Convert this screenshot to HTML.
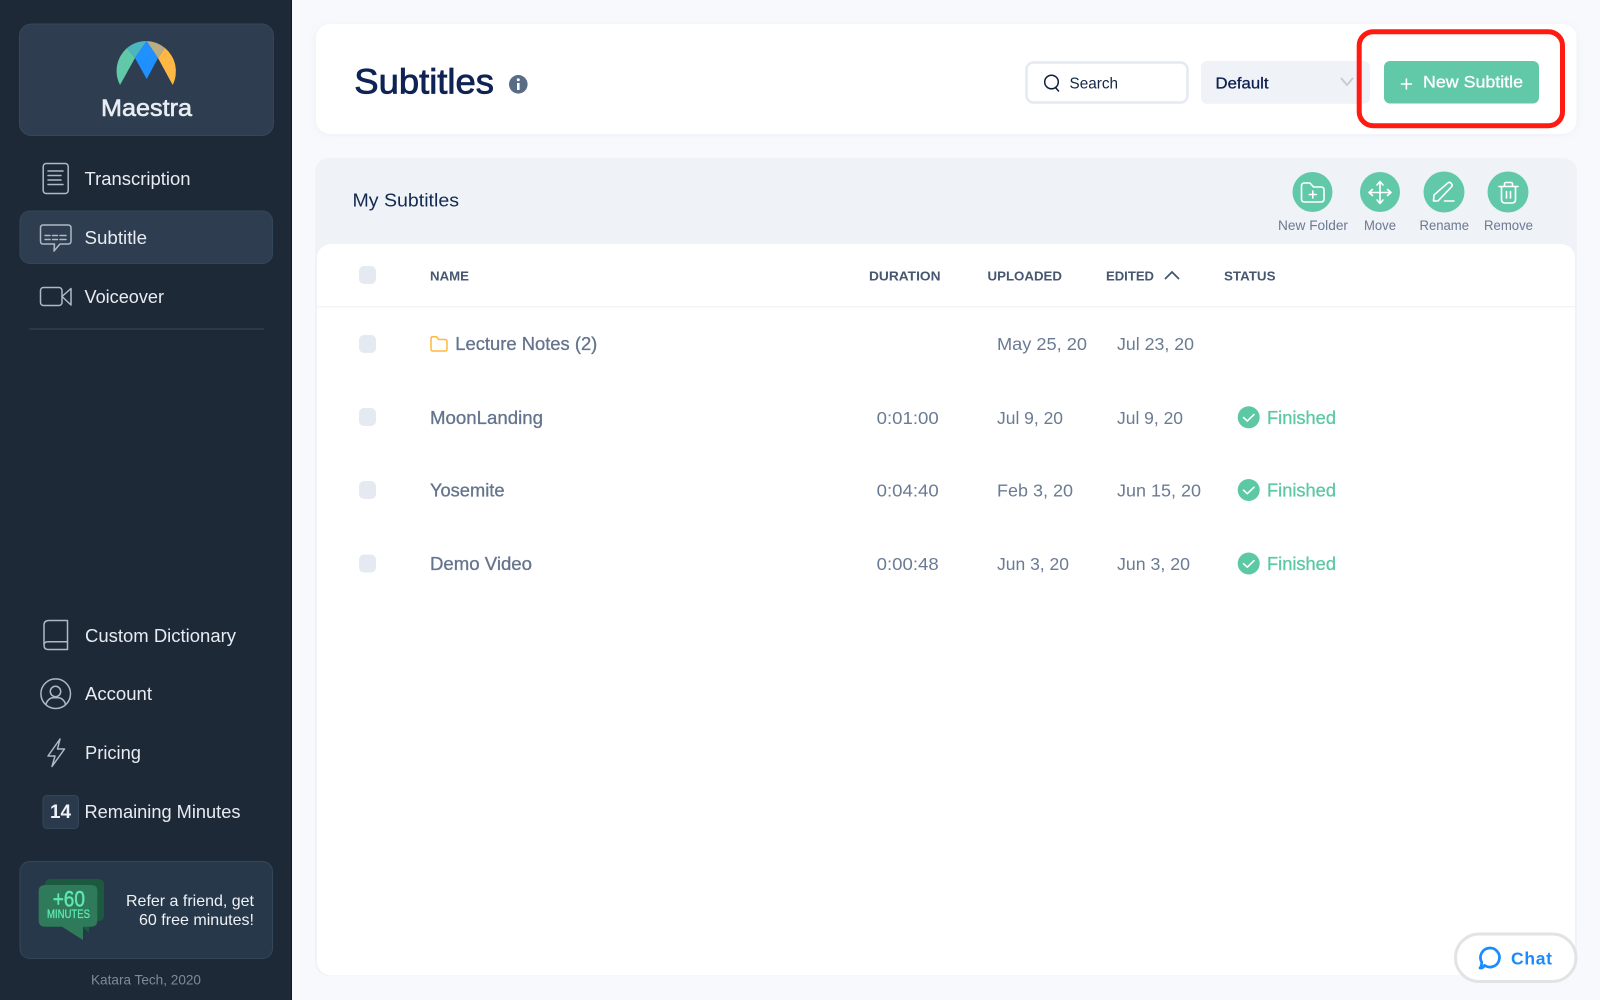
<!DOCTYPE html>
<html lang="en">
<head>
<meta charset="utf-8">
<title>Maestra - Subtitles</title>
<style>
html,body{margin:0;padding:0;width:1600px;height:1000px;overflow:hidden;background:#f8f9fd}
svg{display:block}
text{font-family:"Liberation Sans",Arial,sans-serif;white-space:pre}
.nav{font-size:18px;fill:#e8ecf2}
.hd{font-size:13px;font-weight:bold;fill:#46576f}
.nm{font-size:18px;fill:#64748c;stroke:#64748c;stroke-width:.3}
.cell{font-size:17.5px;fill:#6a7b93}
.fin{font-size:18px;fill:#5cc8a4;stroke:#5cc8a4;stroke-width:.3}
.lbl{font-size:13.5px;fill:#6b7a92}
.ico{fill:none;stroke:#aeb8c6;stroke-width:1.5;stroke-linecap:round;stroke-linejoin:round}
.wi{fill:none;stroke:#fff;stroke-width:1.6;stroke-linecap:round;stroke-linejoin:round}
.cb{fill:#e4e9f2}
</style>
</head>
<body>
<svg width="1600" height="1000" viewBox="0 0 1600 1000" xmlns="http://www.w3.org/2000/svg">
<defs>
<filter id="sh" x="-5%" y="-20%" width="110%" height="140%"><feDropShadow dx="0" dy="1" stdDeviation="4" flood-color="#8a97b5" flood-opacity=".10"/></filter>
</defs>
<rect width="1600" height="1000" fill="#f8f9fd"/>

<!-- Sidebar -->
<rect x="0" y="0" width="291" height="1000" fill="#1e2938"/>
<rect x="291" y="0" width="1" height="1000" fill="#14181f"/>

<rect x="19.5" y="24" width="254" height="111.500" rx="12" fill="#2e3e50" stroke="#35485b"/>
<!-- Logo -->
<path d="M127 48 A30.5 30.5 0 0 0 120 85 L135 58 Z" fill="#62c9a8"/>
<path d="M127 48 A30.5 30.5 0 0 1 146.7 41 L135 58 Z" fill="#4bb5c0"/>
<path d="M146.7 41 L158 58 L146.7 79 L135 58 Z" fill="#1e90ff"/>
<path d="M146.7 41 A30.5 30.5 0 0 1 165 48 L158 58 Z" fill="#b8ad85"/>
<path d="M165 48 A30.5 30.5 0 0 1 172.7 85 L158 58 Z" fill="#ffb846"/>
<text x="101" y="116" font-size="24.5" fill="#e9edf3" stroke="#e9edf3" stroke-width=".6" textLength="91" lengthAdjust="spacingAndGlyphs">Maestra</text>

<!-- Transcription -->
<rect x="43.2" y="163.5" width="25" height="30" rx="3" class="ico"/>
<path d="M48 171H63M48 175.5H61M48 180H61M48 184.5H63" class="ico" stroke-width="1.2"/>
<text x="84.5" y="185" class="nav" textLength="106" lengthAdjust="spacingAndGlyphs">Transcription</text>

<!-- Subtitle -->
<rect x="20" y="211" width="252.5" height="52.5" rx="10" fill="#2e3e50" stroke="#33475a"/>
<path d="M43 225H68Q71 225 71 228V241Q71 244 68 244H60L54 251L54.5 244H43Q40.500 244 40.500 241V228Q40.500 225 43 225Z" class="ico"/>
<path d="M45 235.500H50M52.500 235.500H57.500M60 235.500H66M45 239.500H50M52.500 239.500H57.500M60 239.500H66" class="ico" stroke-width="1.200"/>
<text x="84.500" y="244" class="nav" textLength="62.500" lengthAdjust="spacingAndGlyphs">Subtitle</text>

<!-- Voiceover -->
<rect x="40.500" y="287.500" width="21.500" height="18" rx="3" class="ico"/>
<path d="M62 296.500L71 288.500V305Z" class="ico"/>
<text x="84.500" y="303" class="nav" textLength="79.500" lengthAdjust="spacingAndGlyphs">Voiceover</text>

<rect x="29" y="328.500" width="235" height="1" fill="#36495c"/>

<!-- Custom Dictionary -->
<path d="M67.500 620.500H49Q44 620.500 44 625V645Q44 649.500 48 649.500H67.500ZM44 645Q44 641.700 48 641.700H67.500" class="ico"/>
<text x="85" y="642" class="nav" textLength="151" lengthAdjust="spacingAndGlyphs">Custom Dictionary</text>

<!-- Account -->
<circle cx="55.700" cy="693.700" r="14.800" class="ico"/>
<circle cx="55.500" cy="691.500" r="5.200" class="ico"/>
<path d="M46 704.500C47 700 50.500 697.800 53 697.800H58.500C61 697.800 64.500 700 65.500 704.500" class="ico"/>
<text x="85" y="700" class="nav" textLength="67" lengthAdjust="spacingAndGlyphs">Account</text>

<!-- Pricing -->
<path d="M60 739L48 756H55L52 766.500L64.500 749H57.500Z" class="ico"/>
<text x="85" y="759" class="nav" textLength="56" lengthAdjust="spacingAndGlyphs">Pricing</text>

<!-- Remaining -->
<rect x="43" y="795.500" width="35.500" height="33" rx="4" fill="#2a3a4c" stroke="#34475a"/>
<text x="50" y="818" font-size="19" font-weight="bold" fill="#eef1f5" textLength="21" lengthAdjust="spacingAndGlyphs">14</text>
<text x="84.500" y="818" class="nav" textLength="156" lengthAdjust="spacingAndGlyphs">Remaining Minutes</text>

<!-- Refer card -->
<rect x="20" y="861.500" width="252.500" height="97" rx="10" fill="#27384a" stroke="#34475a"/>
<path d="M51 879H98Q104 879 104 885V915Q104 921 98 921H89V933L76 921H51Q45 921 45 915V885Q45 879 51 879Z" fill="#1c5a40"/>
<path d="M45 885H91Q97.300 885 97.300 891V920.500Q97.300 926.700 91 926.700H83V940L62 926.700H45Q38.700 926.700 38.700 920.500V891Q38.700 885 45 885Z" fill="#2f7a5a"/>
<text x="52.700" y="906.500" font-size="22.500" fill="#5fe8b0" stroke="#5fe8b0" stroke-width=".5" textLength="32.300" lengthAdjust="spacingAndGlyphs">+60</text>
<text x="47" y="918" font-size="12" fill="#5fe8b0" stroke="#5fe8b0" stroke-width=".3" textLength="43" lengthAdjust="spacingAndGlyphs">MINUTES</text>
<text x="126" y="906" font-size="16" fill="#eef1f5" textLength="128" lengthAdjust="spacingAndGlyphs">Refer a friend, get</text>
<text x="139" y="925" font-size="16" fill="#eef1f5" textLength="115" lengthAdjust="spacingAndGlyphs">60 free minutes!</text>
<text x="91" y="984.500" font-size="14" fill="#7f8a98" textLength="110" lengthAdjust="spacingAndGlyphs">Katara Tech, 2020</text>

<!-- Header card -->
<rect x="316" y="24" width="1260.500" height="110" rx="14" fill="#fff" filter="url(#sh)"/>
<text x="354.300" y="93.300" font-size="35" fill="#0f2354" stroke="#0f2354" stroke-width=".8" textLength="139.700" lengthAdjust="spacingAndGlyphs">Subtitles</text>
<circle cx="518.300" cy="84.300" r="9.300" fill="#5a6c85"/>
<rect x="517" y="83" width="2.600" height="7" fill="#fff"/>
<circle cx="518.300" cy="79.800" r="1.500" fill="#fff"/>

<!-- Search -->
<rect x="1026.500" y="62.500" width="161" height="40" rx="7" fill="#fff" stroke="#e4e9f2" stroke-width="2.500"/>
<circle cx="1051.500" cy="82" r="6.800" fill="none" stroke="#0f1f3d" stroke-width="1.500"/>
<path d="M1055.500 87.500L1058.500 91" fill="none" stroke="#0f1f3d" stroke-width="1.500" stroke-linecap="round"/>
<text x="1069.500" y="88.700" font-size="16" fill="#142448" textLength="48.500" lengthAdjust="spacingAndGlyphs">Search</text>

<!-- Select -->
<rect x="1201" y="61" width="169" height="42.700" rx="6" fill="#eff2f7"/>
<text x="1215.500" y="88.500" font-size="16" fill="#0f2050" stroke="#0f2050" stroke-width=".3" textLength="53" lengthAdjust="spacingAndGlyphs">Default</text>
<path d="M1341 78L1347 85L1353 78" fill="none" stroke="#c8ccd3" stroke-width="2"/>

<!-- New Subtitle -->
<rect x="1384" y="61" width="155" height="42.500" rx="6" fill="#62c9a8"/>
<path d="M1406.400 79V89M1401.400 84H1411.400" class="wi" stroke-width="1.800"/>
<text x="1423" y="87.700" font-size="17" fill="#fff" stroke="#fff" stroke-width=".3" textLength="100" lengthAdjust="spacingAndGlyphs">New Subtitle</text>

<!-- Red highlight -->
<rect x="1359.200" y="31.700" width="203.300" height="94" rx="14" fill="none" stroke="#ff1a12" stroke-width="5"/>

<!-- Panel -->
<rect x="315" y="158" width="1262" height="818" rx="14" fill="#eff2f7"/>
<text x="352.500" y="206.700" font-size="18" fill="#152a50" textLength="106.500" lengthAdjust="spacingAndGlyphs">My Subtitles</text>

<!-- Action buttons -->
<circle cx="1312.500" cy="192" r="20" fill="#62c9a8"/>
<path d="M1301.500 186Q1301.500 183 1304.500 183H1310L1313.500 187H1321Q1324 187 1324 190V199Q1324 202 1321 202H1304.500Q1301.500 202 1301.500 199Z" class="wi"/>
<path d="M1312.800 191V198M1309.300 194.500H1316.300" class="wi" stroke-width="1.300"/>
<circle cx="1380" cy="192" r="20" fill="#62c9a8"/>
<path d="M1380 182V203M1369.500 192.500H1391M1377 185L1380 181.500L1383 185M1377 200L1380 203.500L1383 200M1372.500 189.500L1369 192.500L1372.500 195.500M1387.500 189.500L1391 192.500L1387.500 195.500" class="wi"/>
<circle cx="1444" cy="192" r="20.500" fill="#62c9a8"/>
<path d="M1434 195L1448 182.800Q1449.800 181.800 1451 183.200L1451.800 184.200Q1452.700 185.500 1451.500 186.800L1438 201H1433.500Z" class="wi"/>
<path d="M1444.500 201H1454" class="wi"/>
<circle cx="1508" cy="192" r="20.500" fill="#62c9a8"/>
<path d="M1499 186.500H1518M1501.500 186.500V199.500Q1501.500 203 1505 203H1512Q1515.500 203 1515.500 199.500V186.500M1504.500 186.500V184Q1504.500 182.500 1506 182.500H1511Q1512.500 182.500 1512.500 184V186.500M1506.500 191.500V198M1510.500 191.500V198" class="wi"/>
<text x="1278" y="230" class="lbl" textLength="70" lengthAdjust="spacingAndGlyphs">New Folder</text>
<text x="1364" y="230" class="lbl" textLength="32" lengthAdjust="spacingAndGlyphs">Move</text>
<text x="1419.500" y="230" class="lbl" textLength="49.500" lengthAdjust="spacingAndGlyphs">Rename</text>
<text x="1484" y="230" class="lbl" textLength="49" lengthAdjust="spacingAndGlyphs">Remove</text>

<!-- Table card -->
<rect x="317" y="244" width="1258" height="731.500" rx="14" fill="#fff"/>
<rect x="317" y="306" width="1258" height="1.500" fill="#f3f4f8"/>
<rect x="359" y="266" width="17" height="18" rx="5" class="cb"/>
<text x="430" y="280.500" class="hd" textLength="39" lengthAdjust="spacingAndGlyphs">NAME</text>
<text x="869" y="280.500" class="hd" textLength="71.500" lengthAdjust="spacingAndGlyphs">DURATION</text>
<text x="987.500" y="280.500" class="hd" textLength="74.500" lengthAdjust="spacingAndGlyphs">UPLOADED</text>
<text x="1106" y="280.500" class="hd" textLength="48" lengthAdjust="spacingAndGlyphs">EDITED</text>
<path d="M1165 279L1172 272L1179 279" fill="none" stroke="#46576f" stroke-width="1.800"/>
<text x="1224" y="280.500" class="hd" textLength="51.500" lengthAdjust="spacingAndGlyphs">STATUS</text>

<!-- Row 1 -->
<rect x="359" y="335" width="17" height="18" rx="5" class="cb"/>
<path d="M431 338.500Q431 336.700 432.800 336.700H436.500L438.500 339.500H445Q447 339.500 447 341.500V349Q447 351 445 351H433Q431 351 431 349Z" fill="none" stroke="#ffb83f" stroke-width="1.500" stroke-linejoin="round"/>
<text x="455.300" y="350" class="nm" textLength="142" lengthAdjust="spacingAndGlyphs">Lecture Notes (2)</text>
<text x="997" y="350" class="cell" textLength="90" lengthAdjust="spacingAndGlyphs">May 25, 20</text>
<text x="1117" y="350" class="cell" textLength="77" lengthAdjust="spacingAndGlyphs">Jul 23, 20</text>

<!-- Row 2 -->
<rect x="359" y="408" width="17" height="18" rx="5" class="cb"/>
<text x="430" y="424" class="nm" textLength="113" lengthAdjust="spacingAndGlyphs">MoonLanding</text>
<text x="876.700" y="424" class="cell" textLength="62" lengthAdjust="spacingAndGlyphs">0:01:00</text>
<text x="997" y="424" class="cell" textLength="66" lengthAdjust="spacingAndGlyphs">Jul 9, 20</text>
<text x="1117" y="424" class="cell" textLength="66" lengthAdjust="spacingAndGlyphs">Jul 9, 20</text>
<circle cx="1248.700" cy="417.300" r="11" fill="#5cc8a4"/>
<path d="M1243.500 417.500L1247.300 421L1254 414.500" class="wi" stroke-width="2"/>
<text x="1267" y="424" class="fin" textLength="69" lengthAdjust="spacingAndGlyphs">Finished</text>

<!-- Row 3 -->
<rect x="359" y="481" width="17" height="18" rx="5" class="cb"/>
<text x="430" y="496.500" class="nm" textLength="74.500" lengthAdjust="spacingAndGlyphs">Yosemite</text>
<text x="876.700" y="496.500" class="cell" textLength="62" lengthAdjust="spacingAndGlyphs">0:04:40</text>
<text x="997" y="496.500" class="cell" textLength="76" lengthAdjust="spacingAndGlyphs">Feb 3, 20</text>
<text x="1117" y="496.500" class="cell" textLength="84" lengthAdjust="spacingAndGlyphs">Jun 15, 20</text>
<circle cx="1248.700" cy="490" r="11" fill="#5cc8a4"/>
<path d="M1243.500 490.200L1247.300 493.700L1254 487.200" class="wi" stroke-width="2"/>
<text x="1267" y="496.500" class="fin" textLength="69" lengthAdjust="spacingAndGlyphs">Finished</text>

<!-- Row 4 -->
<rect x="359" y="554.500" width="17" height="18" rx="5" class="cb"/>
<text x="430" y="570" class="nm" textLength="102" lengthAdjust="spacingAndGlyphs">Demo Video</text>
<text x="876.700" y="570" class="cell" textLength="62" lengthAdjust="spacingAndGlyphs">0:00:48</text>
<text x="997" y="570" class="cell" textLength="72" lengthAdjust="spacingAndGlyphs">Jun 3, 20</text>
<text x="1117" y="570" class="cell" textLength="73" lengthAdjust="spacingAndGlyphs">Jun 3, 20</text>
<circle cx="1248.700" cy="563.500" r="11" fill="#5cc8a4"/>
<path d="M1243.500 563.700L1247.300 567.200L1254 560.700" class="wi" stroke-width="2"/>
<text x="1267" y="570" class="fin" textLength="69" lengthAdjust="spacingAndGlyphs">Finished</text>

<!-- Chat -->
<rect x="1455.500" y="934" width="120.500" height="47.500" rx="23.700" fill="#fff" stroke="#e1e3e5" stroke-width="3"/>
<path d="M1484.500 965.300A9.500 9.500 0 1 0 1481.700 962.200Q1481.700 966 1480 968Q1483 968.500 1484.500 965.300Z" fill="none" stroke="#1a8cff" stroke-width="2.700" stroke-linejoin="round"/>
<text x="1511" y="964.300" font-size="17.500" font-weight="bold" fill="#1a8cff" textLength="41">Chat</text>
</svg>
</body>
</html>
